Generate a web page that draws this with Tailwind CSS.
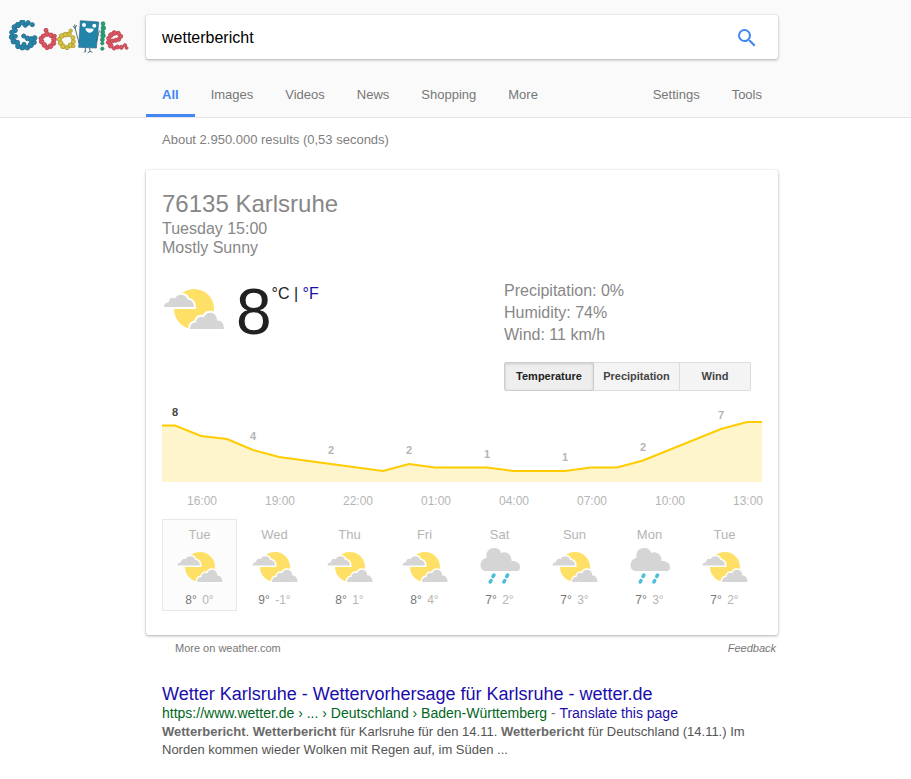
<!DOCTYPE html>
<html lang="en">
<head>
    <meta charset="UTF-8">
    <meta name="viewport" content="width=device-width, initial-scale=1">
    <title>wetterbericht - Google Search</title>
    <script src="https://cdn.jsdelivr.net/npm/@tailwindcss/browser@4"></script>
</head>
<body class="bg-white text-[13px] text-[#777] font-['Liberation_Sans',Arial,sans-serif]">

    <!-- weather icons -->
    <svg class="hidden">
        <symbol id="partly" viewBox="0 0 64 64">
            <circle cx="32" cy="32" r="20" fill="#ffe066"/>
            <g fill="#d5d5d5" stroke="#fff" stroke-width="4" style="paint-order: stroke">
                <path d="M2 30C2 27 4 25.500 6.500 25.500C7 21 11 20 13 21.500C14.500 18 18 17 21 18C23.500 18.500 25 20.500 25.500 22.500C29.500 22.500 32 26 32 30Z"/>
                <path d="M28 52C28 47 31 45 34 45.500C34 41 38 38.500 41.500 40.500C43.500 36 47 35 50 36C53.500 37 55 40 55 43.500C59 43 62 46.500 62 52Z"/>
            </g>
        </symbol>
        <symbol id="rain" viewBox="0 0 48 48">
            <path fill="#d5d5d5" d="M10 28C6.500 28 4.500 25.500 4.500 22C4.500 18.500 7 15.500 10.500 15C9.500 9 13 5 18 5C22 5 24.500 7 25 10C30 7.500 36 11.500 35.500 18C40 17.500 44 20 44 24C44 26.500 43 28 41 28Z"/>
            <path fill="none" stroke="#4dbdd9" stroke-width="3.500" stroke-linecap="round" d="M17.900 32L17 33.500M15 37.500L14.200 39M31.600 32L30.700 33.500M28.700 37.500L27.900 39"/>
        </symbol>
    </svg>

    <header class="bg-[#fafafa] border-b border-[#e5e5e5]">
        <div class="flex pt-[15px]">
            <a href="#" aria-label="Google" class="w-[146px] shrink-0 pl-[9px] pt-[5px]">
                <svg class="w-[120px] h-[34px]" viewBox="27 45 360 102">
                    <g fill="#2384aa" stroke="#2a7391" stroke-width="3">
                        <circle cx="97" cy="59" r="6"/><circle cx="84" cy="54" r="7"/><circle cx="76" cy="61" r="6"/><circle cx="67" cy="52" r="8"/><circle cx="54" cy="60" r="8"/><circle cx="43" cy="66" r="7"/><circle cx="45" cy="76" r="7"/><circle cx="36" cy="82" r="7"/><circle cx="36" cy="96" r="8"/><circle cx="46" cy="94" r="6"/><circle cx="41" cy="109" r="8"/><circle cx="52" cy="113" r="7"/><circle cx="54" cy="124" r="7"/><circle cx="67" cy="127" r="8"/><circle cx="72" cy="118" r="6"/><circle cx="82" cy="128" r="7"/><circle cx="92" cy="120" r="8"/><circle cx="102" cy="112" r="7"/><circle cx="104" cy="99" r="7"/><circle cx="93" cy="103" r="8"/><circle cx="82" cy="100" r="7"/><circle cx="71" cy="93" r="6"/>
                    </g>
                    <g fill="#e0525f" stroke="#bd4c58" stroke-width="3">
                        <circle cx="138" cy="76" r="6"/><circle cx="141" cy="87" r="7"/><circle cx="153" cy="91" r="7"/><circle cx="164" cy="93" r="5"/><circle cx="162" cy="103" r="7"/><circle cx="160" cy="115" r="7"/><circle cx="151" cy="124" r="7"/><circle cx="141" cy="128" r="6"/><circle cx="133" cy="120" r="7"/><circle cx="125" cy="110" r="7"/><circle cx="123" cy="100" r="6"/><circle cx="130" cy="93" r="6"/>
                    </g>
                    <g fill="#d8c43a" stroke="#b0a03a" stroke-width="3">
                        <circle cx="212" cy="77" r="5"/><circle cx="207" cy="88" r="7"/><circle cx="196" cy="89" r="7"/><circle cx="185" cy="93" r="7"/><circle cx="178" cy="103" r="6"/><circle cx="182" cy="114" r="7"/><circle cx="189" cy="124" r="7"/><circle cx="201" cy="128" r="6"/><circle cx="211" cy="121" r="7"/><circle cx="220" cy="123" r="5"/><circle cx="220" cy="110" r="6"/><circle cx="219" cy="98" r="6"/>
                    </g>
                    <path fill="#2384aa" stroke="#2a6380" stroke-width="2" d="M241 47L296 51L289 129L236 127Z"/>
                    <path fill="none" stroke="#35596b" stroke-width="2.500" d="M237 114L225 68M219 63L225 70L230 60M224 58L225 70M290 110L298 76M256 128L256 142M252 142L258 136M269 129L270 140M263 144L270 139L277 142"/>
                    <circle cx="252" cy="60" r="6" fill="#fff"/>
                    <circle cx="283" cy="62" r="6" fill="#fff"/>
                    <path fill="#fff" d="M256 70L281 71C279 88 258 87 256 70Z"/>
                    <g fill="#1fa173" stroke="#2c7e60" stroke-width="2">
                        <circle cx="309" cy="56" r="6"/><circle cx="310" cy="69" r="7"/><circle cx="308" cy="81" r="6"/><circle cx="309" cy="92" r="7"/><circle cx="307" cy="104" r="6"/><circle cx="307" cy="115" r="5"/><circle cx="307" cy="131" r="5"/>
                    </g>
                    <g fill="#e0525f" stroke="#bd4c58" stroke-width="3">
                        <circle cx="337" cy="108" r="6"/><circle cx="347" cy="106" r="6"/><circle cx="356" cy="103" r="6"/><circle cx="362" cy="94" r="6"/><circle cx="355" cy="85" r="6"/><circle cx="343" cy="84" r="7"/><circle cx="333" cy="90" r="7"/><circle cx="326" cy="100" r="6"/><circle cx="325" cy="112" r="6"/><circle cx="332" cy="122" r="7"/><circle cx="342" cy="130" r="5"/><circle cx="352" cy="126" r="6"/><circle cx="364" cy="127" r="6"/><circle cx="375" cy="121" r="5"/><circle cx="380" cy="129" r="4"/>
                    </g>
                </svg>
            </a>
            <div class="w-full max-w-[632px]">
                <form class="flex h-11 bg-white rounded-[2px] shadow-[0_1px_3px_rgba(0,0,0,0.3),0_0_1px_rgba(0,0,0,0.2)]">
                    <input type="text" aria-label="Search" value="wetterbericht" class="grow min-w-0 px-4 pt-px text-base text-black outline-none">
                    <button type="button" aria-label="Google Search" class="w-16 flex items-center justify-center pl-px pt-px">
                        <svg class="size-6" viewBox="0 0 24 24" fill="#4285f4">
                            <path d="M15.500 14h-.79l-.28-.27A6.471 6.471 0 0 0 16 9.500 6.500 6.500 0 1 0 9.500 16c1.610 0 3.090-.59 4.230-1.570l.27.28v.79l5 4.990L20.490 19l-4.990-5zm-6 0C7.010 14 5 11.990 5 9.500S7.010 5 9.500 5 14 7.010 14 9.500 11.990 14 9.500 14z"/>
                        </svg>
                    </button>
                </form>
                <nav class="flex mt-4 leading-[39px]">
                    <a href="#" class="px-4 font-bold text-[#4285f4] border-b-3 border-[#4285f4]">All</a>
                    <a href="#" class="px-4">Images</a>
                    <a href="#" class="px-4">Videos</a>
                    <a href="#" class="px-4">News</a>
                    <a href="#" class="px-4">Shopping</a>
                    <a href="#" class="px-4">More</a>
                    <a href="#" class="px-4 ml-auto">Settings</a>
                    <a href="#" class="px-4">Tools</a>
                </nav>
            </div>
        </div>
    </header>

    <main class="ml-[146px] max-w-[632px]">
        <p class="px-4 pt-3 leading-5 text-[#808080]">About 2.950.000 results (0,53 seconds)</p>

        <section class="mt-5 px-4 pt-5 pb-6 bg-white rounded-[2px] text-[#878787] shadow-[0_1px_3px_rgba(0,0,0,0.3),0_0_1px_rgba(0,0,0,0.2)]">
            <h2 class="mb-[2px] text-2xl leading-[27px]">76135 Karlsruhe</h2>
            <p class="text-base leading-[19px]">Tuesday 15:00</p>
            <p class="text-base leading-[19px]">Mostly Sunny</p>

            <div class="flex justify-between mt-5">
                <div class="flex">
                    <svg class="size-16"><use href="#partly"/></svg>
                    <span class="ml-[10px] text-[64px] leading-[70px] text-[#212121]">8</span>
                    <p class="pt-[7px] text-base leading-5 text-[#212121]">°C | <a href="#" class="text-[#1a0dab]">°F</a></p>
                </div>
                <div class="w-[258px] pt-[3px]">
                    <ul class="text-base leading-[22px]">
                        <li>Precipitation: 0%</li>
                        <li>Humidity: 74%</li>
                        <li>Wind: 11 km/h</li>
                    </ul>
                    <div class="flex mt-4 h-[29px] text-[11px] font-bold text-[#444]">
                        <button type="button" class="w-[90px] border border-[#ccc] rounded-l-[2px] bg-[#eee] text-[#222] shadow-[inset_0_1px_3px_rgba(0,0,0,0.15)]">Temperature</button>
                        <button type="button" class="w-[86px] border-y border-r border-[#dcdcdc] bg-[#f4f4f4]">Precipitation</button>
                        <button type="button" class="w-[71px] border-y border-r border-[#dcdcdc] rounded-r-[2px] bg-[#f4f4f4]">Wind</button>
                    </div>
                </div>
            </div>

            <!-- hourly temperature -->
            <svg class="block w-full mt-3 overflow-visible" viewBox="0 0 600 110">
                <path fill="#fff5cc" d="M0 22.500H13L39 33L65 36L91 47L117 54L169 61L221 68L247 61L273 64.500H325L351 68H403L429 64.500H455L481 57.500L559 26L585 19H600V79H0Z"/>
                <path fill="none" stroke="#fc0" stroke-width="2" d="M0 22.500H13L39 33L65 36L91 47L117 54L169 61L221 68L247 61L273 64.500H325L351 68H403L429 64.500H455L481 57.500L559 26L585 19H600"/>
                <g class="text-[11px] font-bold" fill="#b5b5b5" text-anchor="middle">
                    <text x="13" y="13" fill="#444">8</text>
                    <text x="91" y="37">4</text>
                    <text x="169" y="51">2</text>
                    <text x="247" y="51">2</text>
                    <text x="325" y="55">1</text>
                    <text x="403" y="58">1</text>
                    <text x="481" y="48">2</text>
                    <text x="559" y="16">7</text>
                </g>
                <g class="text-xs" fill="#b5b5b5" text-anchor="middle">
                    <text x="40" y="102">16:00</text>
                    <text x="118" y="102">19:00</text>
                    <text x="196" y="102">22:00</text>
                    <text x="274" y="102">01:00</text>
                    <text x="352" y="102">04:00</text>
                    <text x="430" y="102">07:00</text>
                    <text x="508" y="102">10:00</text>
                    <text x="586" y="102">13:00</text>
                </g>
            </svg>

            <!-- next days -->
            <div class="grid grid-cols-8 mt-[6px] text-center text-[#b5b5b5]">
                <button type="button" class="pt-[7px] border border-[#e8e8e8] bg-[#fcfcfc]">
                    <div class="leading-4">Tue</div>
                    <svg class="size-12 mx-auto"><use href="#partly"/></svg>
                    <div class="text-xs leading-[19px]"><span class="mr-[2px] text-[#777]">8°</span> 0°</div>
                </button>
                <button type="button" class="pt-[7px] border border-transparent">
                    <div class="leading-4">Wed</div>
                    <svg class="size-12 mx-auto"><use href="#partly"/></svg>
                    <div class="text-xs leading-[19px]"><span class="mr-[2px] text-[#777]">9°</span> -1°</div>
                </button>
                <button type="button" class="pt-[7px] border border-transparent">
                    <div class="leading-4">Thu</div>
                    <svg class="size-12 mx-auto"><use href="#partly"/></svg>
                    <div class="text-xs leading-[19px]"><span class="mr-[2px] text-[#777]">8°</span> 1°</div>
                </button>
                <button type="button" class="pt-[7px] border border-transparent">
                    <div class="leading-4">Fri</div>
                    <svg class="size-12 mx-auto"><use href="#partly"/></svg>
                    <div class="text-xs leading-[19px]"><span class="mr-[2px] text-[#777]">8°</span> 4°</div>
                </button>
                <button type="button" class="pt-[7px] border border-transparent">
                    <div class="leading-4">Sat</div>
                    <svg class="size-12 mx-auto"><use href="#rain"/></svg>
                    <div class="text-xs leading-[19px]"><span class="mr-[2px] text-[#777]">7°</span> 2°</div>
                </button>
                <button type="button" class="pt-[7px] border border-transparent">
                    <div class="leading-4">Sun</div>
                    <svg class="size-12 mx-auto"><use href="#partly"/></svg>
                    <div class="text-xs leading-[19px]"><span class="mr-[2px] text-[#777]">7°</span> 3°</div>
                </button>
                <button type="button" class="pt-[7px] border border-transparent">
                    <div class="leading-4">Mon</div>
                    <svg class="size-12 mx-auto"><use href="#rain"/></svg>
                    <div class="text-xs leading-[19px]"><span class="mr-[2px] text-[#777]">7°</span> 3°</div>
                </button>
                <button type="button" class="pt-[7px] border border-transparent">
                    <div class="leading-4">Tue</div>
                    <svg class="size-12 mx-auto"><use href="#partly"/></svg>
                    <div class="text-xs leading-[19px]"><span class="mr-[2px] text-[#777]">7°</span> 2°</div>
                </button>
            </div>
        </section>

        <div class="flex justify-between mt-[5px] pl-[29px] pr-[2px] text-[11px] leading-4">
            <a href="#">More on weather.com</a>
            <a href="#" class="italic">Feedback</a>
        </div>

        <article class="mt-[27px] px-4">
            <h3 class="text-lg leading-[22px]"><a href="#" class="text-[#1a0dab]">Wetter Karlsruhe - Wettervorhersage für Karlsruhe - wetter.de</a></h3>
            <p class="text-sm leading-4"><cite class="not-italic text-[#006621]">https://www.wetter.de › ... › Deutschland › Baden-Württemberg</cite> - <a href="#" class="text-[#1a0dab]">Translate this page</a></p>
            <p class="mt-[2px] leading-[18px] text-[#545454]"><b class="text-[#6a6a6a]">Wetterbericht</b>. <b class="text-[#6a6a6a]">Wetterbericht</b> für Karlsruhe für den 14.11. <b class="text-[#6a6a6a]">Wetterbericht</b> für Deutschland (14.11.) Im Norden kommen wieder Wolken mit Regen auf, im Süden ...</p>
        </article>
    </main>

</body>
</html>
